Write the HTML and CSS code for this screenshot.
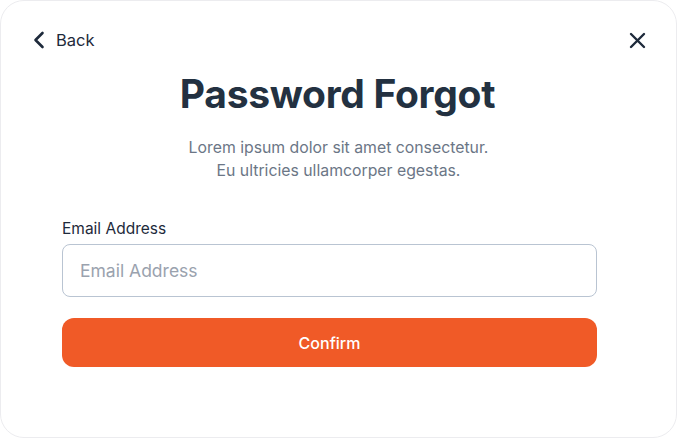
FILE: index.html
```html
<!DOCTYPE html>
<html lang="en">
<head>
<meta charset="utf-8">
<title>Password Forgot</title>
<link rel="stylesheet" href="styles.css">
</head>
<body>
<div class="card">
  <div class="topbar">
    <a class="back" href="#">
      <svg width="12" height="18" viewBox="0 0 12 18" aria-hidden="true"><path d="M9.5 2 L2.5 9 L9.5 16" fill="none" stroke="#1e2a3b" stroke-width="2.6" stroke-linecap="round" stroke-linejoin="round"/></svg>
      <span>Back</span>
    </a>
    <button class="close" aria-label="Close">
      <svg width="17" height="17" viewBox="0 0 17 17" aria-hidden="true"><path d="M2 2 L15 15 M15 2 L2 15" fill="none" stroke="#1e2a3b" stroke-width="2.4" stroke-linecap="round"/></svg>
    </button>
  </div>
  <h1 class="title">Password Forgot</h1>
  <p class="subtitle">Lorem ipsum dolor sit amet consectetur.<br>Eu ultricies ullamcorper egestas.</p>
  <form class="form">
    <label class="label" for="email">Email Address</label>
    <input class="input" id="email" type="email" placeholder="Email Address">
    <button class="confirm" type="button">Confirm</button>
  </form>
</div>
</body>
</html>
```

FILE: styles.css
```css
* { box-sizing: border-box; }
html, body { margin: 0; padding: 0; background: #ffffff; }
body { font-family: Inter, "Noto Sans", sans-serif; width: 677px; height: 438px; }
.card {
  width: 677px;
  height: 438px;
  border: 1px solid #ececef;
  border-radius: 24px;
  background: #fff;
  padding: 27px 30px 0 32px;
  display: flex;
  flex-direction: column;
  align-items: center;
}
.topbar {
  width: 100%;
  display: flex;
  justify-content: space-between;
  align-items: center;
  height: 24px;
}
.back {
  display: flex;
  align-items: center;
  gap: 11px;
  text-decoration: none;
  color: #1e2a3b;
  font-size: 16.5px;
  font-weight: 400;
}
.back svg { display: block; }
.close { background: none; border: 0; padding: 0; display: flex; cursor: pointer; }
.title {
  margin: 17px 4px 0 0;
  font-size: 39px;
  line-height: 50px;
  font-weight: 700;
  color: #233141;
  letter-spacing: -0.3px;
}
.subtitle {
  margin: 17px 2px 0 0;
  text-align: center;
  font-size: 15.8px;
  line-height: 23px;
  color: #6b7686;
}
.form {
  width: 535px;
  align-self: flex-start;
  margin: 37px 0 0 29px;
  display: flex;
  flex-direction: column;
}
.label {
  font-size: 15.5px;
  line-height: 20px;
  color: #1e2a3b;
  font-weight: 400;
}
.input {
  margin-top: 5px;
  height: 53px;
  border: 1px solid #b9c4d2;
  border-radius: 8px;
  padding: 0 17px;
  font-family: inherit;
  font-size: 17.5px;
  color: #1e2a3b;
  outline: none;
}
.input::placeholder { color: #9aa2ae; }
.confirm {
  margin-top: 21px;
  height: 49px;
  border: 0;
  border-radius: 12px;
  background: #f05a27;
  color: #fff;
  font-family: inherit;
  font-size: 16px;
  font-weight: 500;
  cursor: pointer;
}
```
